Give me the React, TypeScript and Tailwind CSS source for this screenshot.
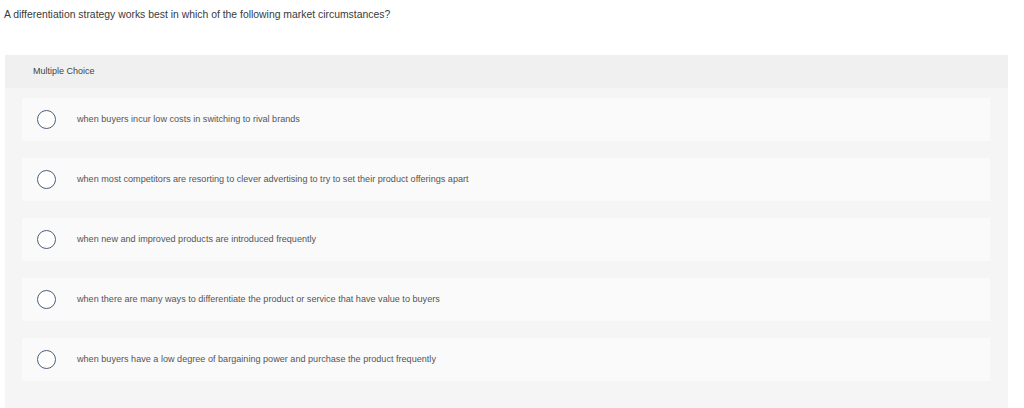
const options = [
  'when buyers incur low costs in switching to rival brands',
  'when most competitors are resorting to clever advertising to try to set their product offerings apart',
  'when new and improved products are introduced frequently',
  'when there are many ways to differentiate the product or service that have value to buyers',
  'when buyers have a low degree of bargaining power and purchase the product frequently',
];

export default function App() {
  return (
    <div className="h-[408px] w-[1024px] overflow-hidden bg-white font-['Liberation_Sans',Arial,sans-serif]">
      <p className="pl-[4px] pt-[8px] text-[10.4px] leading-[14px] text-[#3a3a3a]">
        A differentiation strategy works best in which of the following market circumstances?
      </p>

      <div className="ml-[5px] mt-[33px] w-[1003px] bg-[#f5f5f5] pb-[40px]">
        <div className="flex h-[33px] items-center bg-[#f0f0f0] pl-[28px] text-[9px] text-[#444]">
          Multiple Choice
        </div>

        <div className="flex flex-col gap-[17px] pl-[17px] pr-[18px] pt-[10px]">
          {options.map((text) => (
            <label
              key={text}
              className="flex h-[43px] items-center bg-[#fafafa] pl-[15px]"
            >
              <span className="h-[19px] w-[19px] shrink-0 rounded-full border border-[#4a5f7a] bg-white" />
              <span className="ml-[21px] text-[9.1px] text-[#555]">{text}</span>
            </label>
          ))}
        </div>
      </div>
    </div>
  );
}
